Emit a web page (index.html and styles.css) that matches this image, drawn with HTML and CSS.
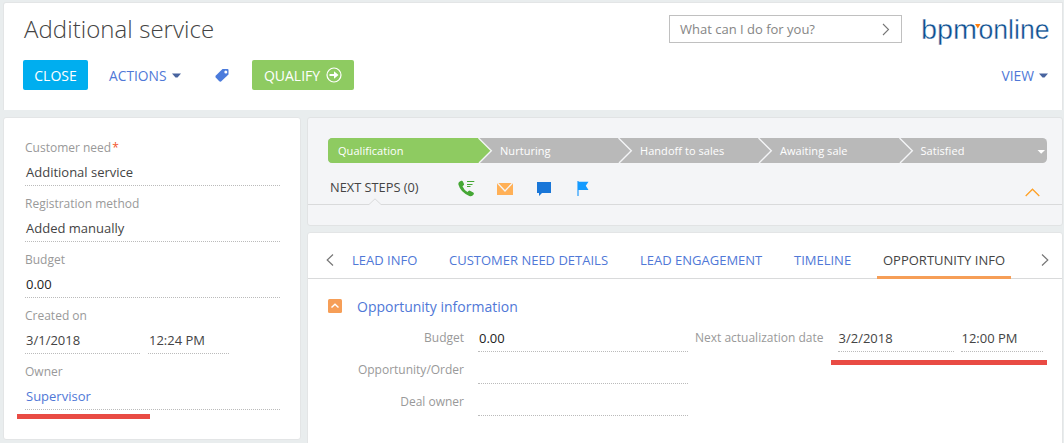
FILE: index.html
```html
<!DOCTYPE html>
<html lang="en">
<head>
<meta charset="utf-8">
<title>Additional service</title>
<link rel="stylesheet" href="styles.css">
</head>
<body>
<div class="page">
  <header class="header">
    <div class="header-top">
      <h1 class="title">Additional service</h1>
      <div class="search">
        <span class="search-text">What can I do for you?</span>
        <svg width="8" height="13" viewBox="0 0 8 13"><path d="M1 1L6.5 6.5L1 12" fill="none" stroke="#777" stroke-width="1.1"/></svg>
      </div>
      <svg class="logo" width="130" height="32" viewBox="0 0 130 32">
        <text class="logo-text" x="1" y="24" textLength="56" lengthAdjust="spacingAndGlyphs">bpm</text>
        <text class="logo-text" x="58.500" y="24" textLength="71" lengthAdjust="spacingAndGlyphs">online</text>
        <path d="M55 9H60.500L57.800 13.500Z" fill="#ff7f0e"/>
      </svg>
    </div>
    <div class="toolbar">
      <button class="btn btn-close">CLOSE</button>
      <a class="menu actions"><span class="menu-text">ACTIONS</span><svg width="9" height="5" viewBox="0 0 9 5"><path d="M0 .5H9L5.500 4.500H3.500Z" fill="#48649f"/></svg></a>
      <svg class="tag" width="14" height="14" viewBox="0 0 14 14"><path d="M7.500 1H12.500Q13.500 1 13.500 2V6.500L6 13.500Q5 14 4 13L.7 9.500Q0 8.500 .9 7.500Z" fill="#4b7bdc"/><circle cx="10.800" cy="4" r="1.500" fill="#fff"/></svg>
      <button class="btn btn-qualify"><span class="qualify-text">QUALIFY</span><svg width="16" height="16" viewBox="0 0 16 16"><circle cx="8" cy="8" r="7" fill="none" stroke="#fff" stroke-width="1.200"/><path d="M3.500 6.900H8V4.200L12.500 8L8 11.800V9.100H3.500Z" fill="#fff"/></svg></button>
      <a class="menu view"><span class="menu-text">VIEW</span><svg width="9" height="5" viewBox="0 0 9 5"><path d="M0 .5H9L5.500 4.500H3.500Z" fill="#48649f"/></svg></a>
    </div>
  </header>
  <div class="columns">
    <aside class="profile">
      <div class="field"><div class="label"><span class="w-need">Customer need</span><span class="required">*</span></div><div class="value">Additional service</div></div>
      <div class="field"><div class="label">Registration method</div><div class="value">Added manually</div></div>
      <div class="field"><div class="label">Budget</div><div class="value number">0.00</div></div>
      <div class="field"><div class="label">Created on</div><div class="datetime"><div class="value date">3/1/2018</div><div class="value time">12:24 PM</div></div></div>
      <div class="field"><div class="label">Owner</div><div class="value link">Supervisor</div></div>
      <div class="marker marker-owner"></div>
    </aside>
    <main class="main">
      <section class="dashboard">
        <div class="stages">
          <svg class="stage-shapes" width="719" height="25" viewBox="0 0 719 25">
            <rect width="719" height="25" rx="4.500" fill="#b9b9b9"/>
            <path d="M4.500 0H151L163.500 12.500L151 25H4.500Q0 25 0 20.500V4.500Q0 0 4.500 0Z" fill="#8ecb61"/>
            <path d="M150.500 0L163.300 12.800L151 25M290.500 0L303.300 12.800L291 25M430.500 0L443.300 12.800L431 25M571.500 0L584.300 12.800L572 25" fill="none" stroke="#f4f5f7" stroke-width="1.400"/>
            <path d="M709.500 12H717L713.200 15.800Z" fill="#fff"/>
          </svg>
          <span>Qualification</span><span>Nurturing</span><span>Handoff to sales</span><span>Awaiting sale</span><span>Satisfied</span>
        </div>
        <div class="steps">
          <span class="steps-title">NEXT STEPS (0)</span>
          <svg class="call" width="17" height="17" viewBox="0 0 17 17"><path d="M3.200 .8Q4.500 .5 5 1.700L6 4Q6.300 5 5.300 5.600L4.500 6.300Q6 10 9.400 12L10.500 10.900Q11.200 10.300 12 10.800L15.300 12.600Q16.500 13.400 15.600 14.500Q14 16.800 11.300 15.900Q2.500 12.500 .4 4.600Q0 2 3.200 .8Z" fill="#45a735"/><path d="M9 1.500H16.300M9 4.500H14.500M9 6.500H12.500" stroke="#45a735"/></svg>
          <svg class="mail" width="16" height="12" viewBox="0 0 16 12"><path d="M0 0H16V12H0Z" fill="#ffb057"/><path d="M.5 0L8 8L15.500 0" fill="none" stroke="#f4f5f7" stroke-width="1.300"/></svg>
          <svg class="chat" width="14" height="14" viewBox="0 0 14 14"><path d="M0 0H14V11H5L2 14V11H0Z" fill="#1976d8"/></svg>
          <svg class="flag" width="12" height="15" viewBox="0 0 12 15"><path d="M0 0H2V15H0Z" fill="#75bffb"/><path d="M1 .7H11.500L8.800 4.700L11.500 9H1Z" fill="#149bff"/></svg>
          <svg class="collapse" width="15" height="9" viewBox="0 0 15 9"><path d="M.7 8L7.500 1.200L14.300 8" fill="none" stroke="#ffa126" stroke-width="1.300"/></svg>
        </div>
        <svg class="divider" width="755" height="8" viewBox="0 0 755 8"><path d="M0 6.500H61L67 .8L73 6.500H755" fill="none" stroke="#d9dadb"/></svg>
      </section>
      <section class="details">
        <nav class="tabs">
          <svg class="prev" width="8" height="12" viewBox="0 0 8 12"><path d="M7 .5L1.200 6L7 11.500" fill="none" stroke="#777" stroke-width="1.200"/></svg>
          <a class="tab t1">LEAD INFO</a><a class="tab t2">CUSTOMER NEED DETAILS</a><a class="tab t3">LEAD ENGAGEMENT</a><a class="tab t4">TIMELINE</a><a class="tab active">OPPORTUNITY INFO</a>
          <svg class="next" width="8" height="12" viewBox="0 0 8 12"><path d="M1 .5L6.800 6L1 11.500" fill="none" stroke="#777" stroke-width="1.200"/></svg>
        </nav>
        <div class="group">
          <svg width="14" height="14" viewBox="0 0 14 14"><rect width="14" height="14" rx="1.500" fill="#f69e57"/><path d="M3.500 8.500L7 5.300L10.500 8.500" fill="none" stroke="#fff" stroke-width="1.500"/></svg>
          <h2 class="group-title">Opportunity information</h2>
        </div>
        <div class="form">
          <div class="form-column">
            <div class="row"><span class="row-label">Budget</span><span class="input number">0.00</span></div>
            <div class="row"><span class="row-label">Opportunity/Order</span><span class="input"></span></div>
            <div class="row"><span class="row-label">Deal owner</span><span class="input"></span></div>
          </div>
          <div class="form-column second">
            <div class="row"><span class="row-label">Next actualization date</span><span class="input date">3/2/2018</span><span class="input time">12:00 PM</span></div>
            <div class="marker marker-date"></div>
          </div>
        </div>
      </section>
    </main>
  </div>
</div>
</body>
</html>
```
FILE: styles.css
```css
* { box-sizing: border-box; }
body { margin: 0; background: #e9edee; font-family: "Open Sans", sans-serif; font-size: 13px; color: #444; overflow: hidden; }
svg { display: block; flex: none; }
.page { height: 443px; padding: 2px 1px 0 3px; overflow: hidden; }
.header { height: 108px; background: #fff; border: 1px solid #e3e5e6; border-bottom: 0; border-radius: 3px 0 0 0; }
.header-top { display: flex; align-items: flex-start; height: 57px; padding: 0 12px 0 20px; }
.title { margin: 9px 0 0; font-size: 24px; font-weight: 300; line-height: 34px; letter-spacing: .06px; white-space: nowrap; }
.search { display: flex; align-items: center; justify-content: space-between; width: 233px; height: 28px; margin: 12px 18px 0 auto; padding: 0 11px 0 10px; border: 1px solid #c0c0c0; color: #858585; }
.logo { margin-top: 12px; }
.logo-text { font: 27px "Liberation Sans", sans-serif; fill: #0d4f91; stroke: #fff; stroke-width: .35px; }
.toolbar { display: flex; align-items: center; height: 30px; padding: 0 14px 0 19px; }
.btn { display: flex; align-items: center; justify-content: center; height: 30px; padding: 0; border: 0; border-radius: 2px; font: 14px "Open Sans", sans-serif; color: #fff; }
.btn-close { width: 65px; background: #00aeef; }
.btn-qualify { width: 102px; gap: 6px; margin-left: 23px; background: #8ecb61; }
.menu { display: flex; align-items: center; gap: 5px; font-size: 13.8px; color: #5078d7; }
.actions { width: 106px; margin-left: 21px; }
.view { margin-left: auto; }
.columns { display: flex; gap: 6px; padding-top: 7px; }
.profile { flex: none; width: 298px; height: 323px; padding: 20px 20px 0 21px; background: #fff; border: 1px solid #e3e5e6; border-radius: 3px; }
.field { height: 56px; }
.label { height: 20px; line-height: 20px; font-size: 12px; color: #999; white-space: nowrap; }
.required { margin-left: 1px; color: #f2552c; }
.value { height: 28px; padding-left: 1px; line-height: 29px; border-bottom: 1px dotted #bbb; }
.datetime { display: flex; gap: 8px; }
.date { width: 115px; }
.time { width: 81px; }
.number { color: #222; }
.link { color: #5078d7; }
.marker { height: 5px; background: #e94b44; }
.marker-owner { width: 133px; margin: -4px 0 0 -8.5px; }
.main { flex: 1; min-width: 0; display: flex; flex-direction: column; gap: 6px; }
.dashboard { height: 109px; padding-top: 20px; background: #f4f5f7; border: 1px solid #e1e3e4; border-radius: 3px; overflow: hidden; }
.stages { position: relative; display: grid; grid-template-columns: 162px 140px 140px 140.500px 1fr; width: 719px; height: 25px; margin-left: 20px; padding-left: 10px; line-height: 25px; font-size: 11px; letter-spacing: .05px; color: #fff; }
.stage-shapes { position: absolute; left: 0; top: 0; }
.stages span { position: relative; }
.steps { display: flex; align-items: flex-start; height: 35px; padding: 0 22px; font-size: 12.8px; }
.steps-title { width: 128px; margin-top: 14px; line-height: 20px; white-space: nowrap; }
.call { margin-top: 17px; }
.mail { margin: 20px 24px 0 22px; }
.chat { margin-top: 19px; }
.flag { margin: 18px 0 0 26px; }
.collapse { margin: 25px 0 0 auto; }
.details { height: 230px; background: #fff; border: 1px solid #e3e5e6; border-radius: 3px; }
.tabs { display: flex; align-items: center; height: 46px; padding-left: 18px; border-bottom: 1px solid #d9dadb; font-size: 13px; color: #5078d7; }
.tab { height: 46px; line-height: 54px; white-space: nowrap; }
.prev, .next { margin-top: 9px; }
.t1 { width: 97px; margin-left: 18px; }
.t2 { width: 191px; }
.t3 { width: 154px; }
.t4 { width: 83px; }
.active { width: 134px; padding-left: 6px; border-bottom: 3px solid #f69e57; color: #444; }
.next { margin-left: 30px; }
.group { display: flex; align-items: flex-start; gap: 15px; height: 40px; padding: 20px 0 0 20px; }
.group-title { margin: -2px 0 0; font-size: 14px; font-weight: 400; line-height: 20px; color: #5078d7; }
.form { display: flex; padding-top: 5px; }
.form-column { width: 380px; flex: none; }
.row { display: flex; height: 32px; }
.row-label { width: 156px; margin-right: 14px; line-height: 28px; font-size: 12px; text-align: right; color: #999; white-space: nowrap; }
.input { width: 210px; height: 28px; padding-left: 1px; line-height: 28px; border-bottom: 1px dotted #bbb; }
.second { margin-left: -.5px; }
.second .row-label { width: 136px; }
.second .date { width: 116px; margin-right: 7px; }
.second .time { width: 82px; }
.marker-date { width: 216px; margin: 4px 0 0 143px; }
```
